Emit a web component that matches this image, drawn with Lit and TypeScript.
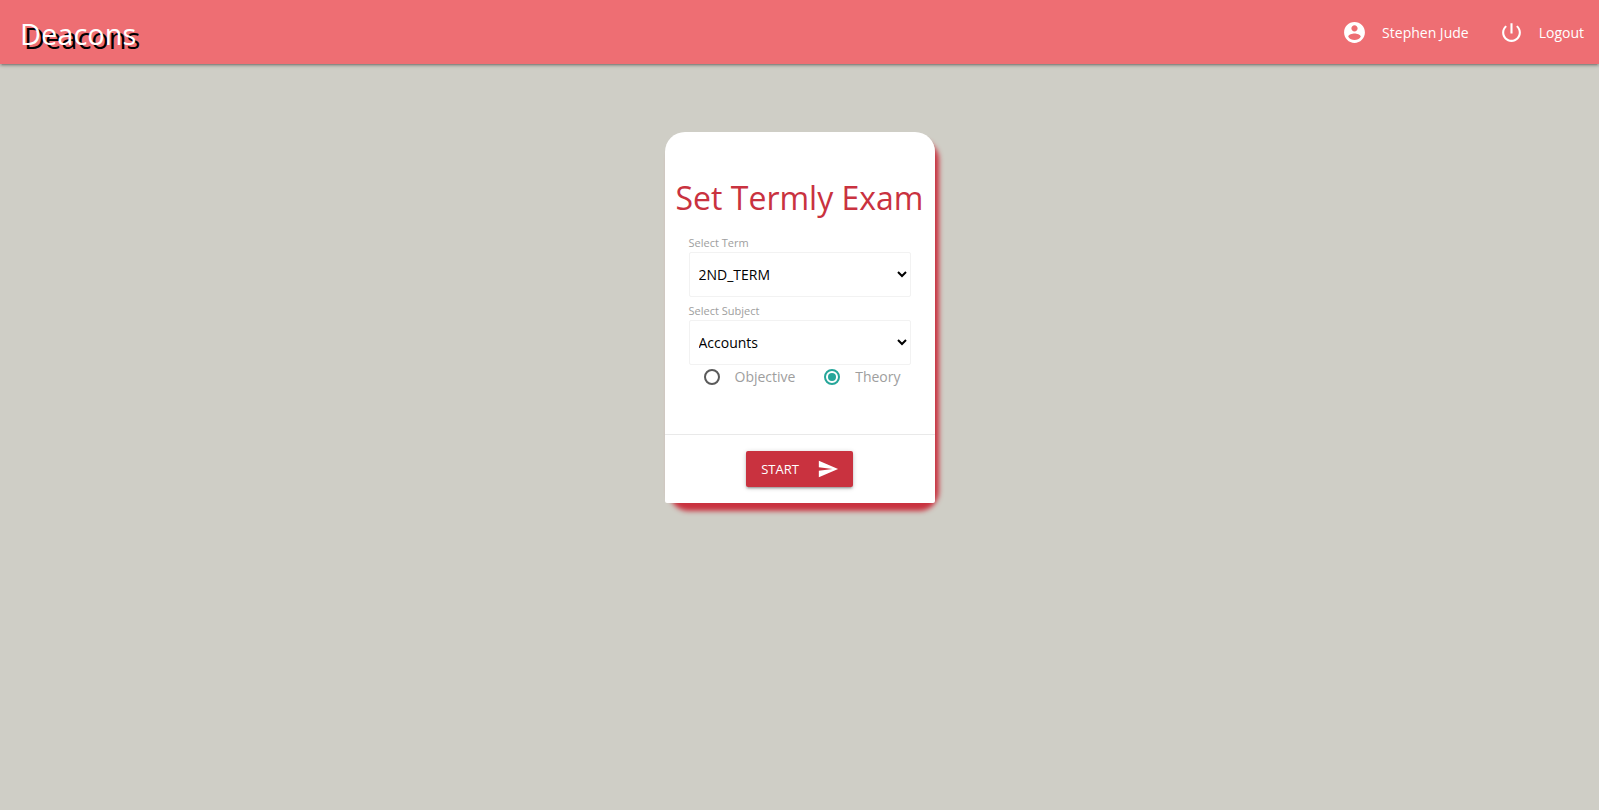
import { LitElement, html, css } from "lit";
import { customElement, state } from "lit/decorators.js";

@customElement("app-root")
export class AppRoot extends LitElement {
  @state() private kind = "theory";

  static styles = css`
    :host {
      display: block;
      min-height: 100vh;
      background: #cfcec6;
      font-family: "Segoe UI", "Open Sans", sans-serif;
      font-size: 15px;
      line-height: 24px;
    }
    *, *::before, *::after { box-sizing: border-box; }
    .nav {
      display: flex;
      justify-content: space-between;
      align-items: center;
      height: 64px;
      padding-left: 20px;
      background: #ee6e73;
      box-shadow: 0 2px 2px 0 rgba(0, 0, 0, 0.14),
        0 3px 1px -2px rgba(0, 0, 0, 0.12), 0 1px 5px 0 rgba(0, 0, 0, 0.2);
    }
    a { color: #fff; text-decoration: none; }
    .brand {
      padding-top: 4px;
      font-size: 29px;
      line-height: 60px;
      text-shadow: 4px 4px #000;
    }
    .links { display: flex; margin: 0; padding: 0; list-style: none; }
    .link {
      display: flex;
      align-items: center;
      gap: 15px;
      height: 64px;
      padding: 0 15px;
      font-size: 14px;
    }
    .text { padding-top: 2px; }
    .icon { width: 25px; height: 25px; fill: currentColor; flex: none; }
    .main { display: flex; justify-content: center; padding: 68px 16px; }
    .card {
      width: 270px;
      border-radius: 20px;
      box-shadow: 4px 8px 5px #c9323f;
    }
    .content {
      padding: 44px 24px 45px;
      border-radius: 20px 20px 0 0;
      background: #fff;
    }
    .title {
      margin: 0 -24px 13px;
      color: #c9323f;
      font-size: 32px;
      line-height: 44px;
      font-weight: 400;
      text-align: center;
      white-space: nowrap;
    }
    .label { display: block; color: #9e9e9e; font-size: 11px; line-height: 19px; }
    .select {
      display: block;
      width: 100%;
      height: 45px;
      padding: 5px;
      border: 1px solid #f2f2f2;
      border-radius: 2px;
      background: #fff;
      color: #000;
      font-family: inherit;
      font-size: 14px;
    }
    .select + .label { margin-top: 4px; }
    .radios {
      display: flex;
      justify-content: space-between;
      padding: 0 10px 0 15px;
    }
    .radio {
      display: flex;
      align-items: center;
      gap: 15px;
      color: #9e9e9e;
      font-size: 14px;
    }
    .dot {
      display: grid;
      place-content: center;
      appearance: none;
      width: 16px;
      height: 16px;
      margin: 0;
      border: 2px solid #5a5a5a;
      border-radius: 50%;
    }
    .dot:checked { border-color: #26a69a; }
    .dot:checked::before {
      content: "";
      width: 8px;
      height: 8px;
      border-radius: 50%;
      background: #26a69a;
    }
    .action {
      display: flex;
      justify-content: center;
      padding: 16px 24px;
      border-top: 1px solid #e9e9e9;
      border-radius: 0 0 2px 2px;
      background: #fff;
    }
    .start {
      display: flex;
      align-items: center;
      gap: 18px;
      height: 36px;
      padding: 0 14px 0 15px;
      border: 0;
      border-radius: 2px;
      background: #c9323f;
      color: #fff;
      font-family: inherit;
      font-size: 13px;
      box-shadow: 0 2px 2px 0 rgba(0, 0, 0, 0.14),
        0 3px 1px -2px rgba(0, 0, 0, 0.12), 0 1px 5px 0 rgba(0, 0, 0, 0.2);
    }
    .send { width: 22px; height: 22px; fill: currentColor; }
  `;

  private radio(value: string, text: string) {
    return html`<label class="radio">
      <input class="dot" type="radio" name="kind" value=${value}
        .checked=${this.kind === value} @change=${() => (this.kind = value)} />
      <span>${text}</span>
    </label>`;
  }

  render() {
    return html`
      <nav class="nav">
        <a class="brand" href="#">Deacons</a>
        <ul class="links">
          <li><a class="link" href="#profile">
            <svg class="icon" viewBox="0 0 24 24" aria-hidden="true"><path d="M12 2C6.48 2 2 6.48 2 12s4.480 10 10 10 10-4.480 10-10S17.520 2 12 2zm0 3c1.660 0 3 1.340 3 3s-1.340 3-3 3-3-1.340-3-3 1.340-3 3-3zm0 14.200c-2.500 0-4.710-1.280-6-3.220.03-1.990 4-3.080 6-3.080 1.990 0 5.970 1.090 6 3.080-1.290 1.940-3.500 3.220-6 3.220z"/></svg>
            <span class="text">Stephen Jude</span></a></li>
          <li><a class="link" href="#logout">
            <svg class="icon" viewBox="0 0 24 24" aria-hidden="true"><path d="M13 3h-2v10h2V3zm4.830 2.170l-1.420 1.420C17.990 7.860 19 9.810 19 12c0 3.870-3.130 7-7 7s-7-3.130-7-7c0-2.190 1.010-4.140 2.580-5.420L6.170 5.170C4.230 6.820 3 9.260 3 12c0 4.970 4.030 9 9 9s9-4.030 9-9c0-2.740-1.230-5.180-3.170-6.830z"/></svg>
            <span class="text">Logout</span></a></li>
        </ul>
      </nav>
      <main class="main">
        <form class="card" @submit=${(e: Event) => e.preventDefault()}>
          <div class="content">
            <h1 class="title">Set Termly Exam</h1>
            <label class="label" for="term">Select Term</label>
            <select class="select" id="term"><option>2ND_TERM</option></select>
            <label class="label" for="subject">Select Subject</label>
            <select class="select" id="subject"><option>Accounts</option></select>
            <div class="radios">
              ${this.radio("objective", "Objective")}
              ${this.radio("theory", "Theory")}
            </div>
          </div>
          <div class="action">
            <button class="start" type="submit">START
              <svg class="send" viewBox="0 0 24 24" aria-hidden="true"><path d="M2.010 21L23 12 2.010 3 2 10l15 2-15 2z"/></svg>
            </button>
          </div>
        </form>
      </main>
    `;
  }
}
